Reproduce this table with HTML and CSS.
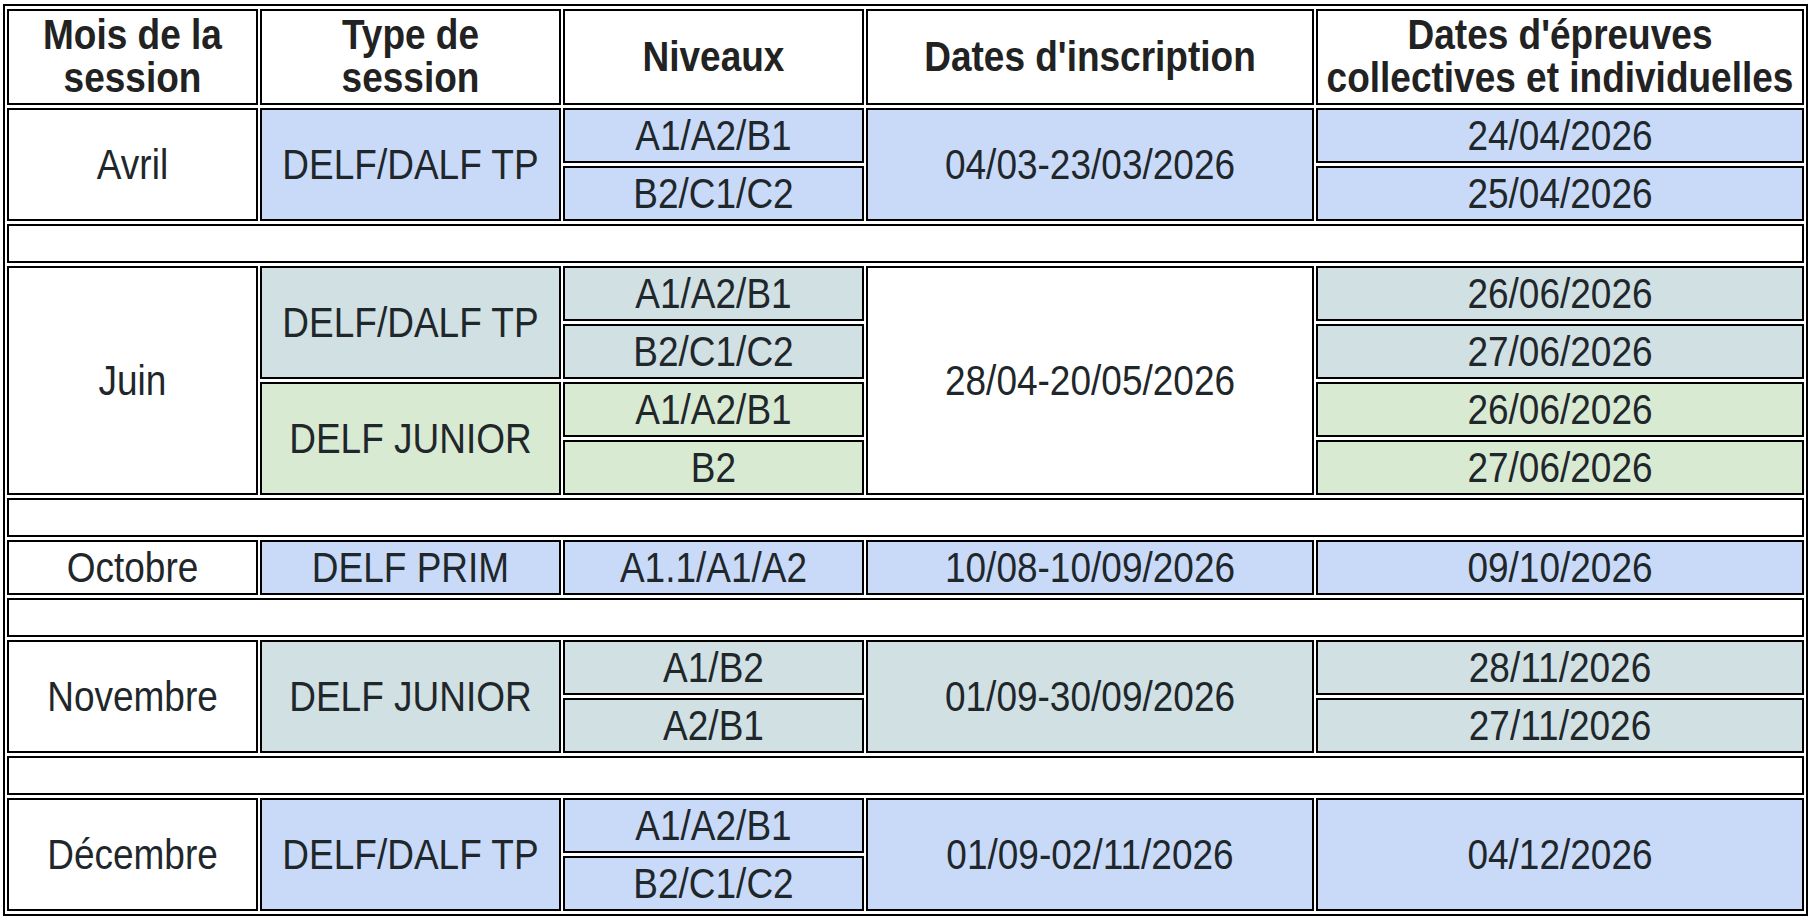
FILE: index.html
```html
<!DOCTYPE html>
<html lang="fr">
<head>
<meta charset="utf-8">
<title>Sessions DELF/DALF 2026</title>
<link rel="stylesheet" href="styles.css">
</head>
<body>
<table class="sched">
  <colgroup>
    <col class="c1"><col class="c2"><col class="c3"><col class="c4"><col class="c5">
  </colgroup>
  <thead>
    <tr class="head">
      <th><span class="t">Mois de la<br>session</span></th>
      <th><span class="t">Type de<br>session</span></th>
      <th><span class="t">Niveaux</span></th>
      <th><span class="t">Dates d'inscription</span></th>
      <th><span class="t">Dates d'épreuves<br>collectives et individuelles</span></th>
    </tr>
  </thead>
  <tbody>
    <tr class="sub">
      <td rowspan="2"><span class="t">Avril</span></td>
      <td rowspan="2" class="blue"><span class="t">DELF/DALF TP</span></td>
      <td class="blue"><span class="t">A1/A2/B1</span></td>
      <td rowspan="2" class="blue"><span class="t">04/03-23/03/2026</span></td>
      <td class="blue"><span class="t">24/04/2026</span></td>
    </tr>
    <tr class="sub">
      <td class="blue"><span class="t">B2/C1/C2</span></td>
      <td class="blue"><span class="t">25/04/2026</span></td>
    </tr>
    <tr class="gap"><td colspan="5"></td></tr>

    <tr class="sub">
      <td rowspan="4"><span class="t">Juin</span></td>
      <td rowspan="2" class="grey"><span class="t">DELF/DALF TP</span></td>
      <td class="grey"><span class="t">A1/A2/B1</span></td>
      <td rowspan="4"><span class="t">28/04-20/05/2026</span></td>
      <td class="grey"><span class="t">26/06/2026</span></td>
    </tr>
    <tr class="sub">
      <td class="grey"><span class="t">B2/C1/C2</span></td>
      <td class="grey"><span class="t">27/06/2026</span></td>
    </tr>
    <tr class="sub">
      <td rowspan="2" class="green"><span class="t">DELF JUNIOR</span></td>
      <td class="green"><span class="t">A1/A2/B1</span></td>
      <td class="green"><span class="t">26/06/2026</span></td>
    </tr>
    <tr class="sub">
      <td class="green"><span class="t">B2</span></td>
      <td class="green"><span class="t">27/06/2026</span></td>
    </tr>
    <tr class="gap"><td colspan="5"></td></tr>

    <tr class="sub">
      <td><span class="t">Octobre</span></td>
      <td class="blue"><span class="t">DELF PRIM</span></td>
      <td class="blue"><span class="t">A1.1/A1/A2</span></td>
      <td class="blue"><span class="t">10/08-10/09/2026</span></td>
      <td class="blue"><span class="t">09/10/2026</span></td>
    </tr>
    <tr class="gap"><td colspan="5"></td></tr>

    <tr class="sub">
      <td rowspan="2"><span class="t">Novembre</span></td>
      <td rowspan="2" class="grey"><span class="t">DELF JUNIOR</span></td>
      <td class="grey"><span class="t">A1/B2</span></td>
      <td rowspan="2" class="grey"><span class="t">01/09-30/09/2026</span></td>
      <td class="grey"><span class="t">28/11/2026</span></td>
    </tr>
    <tr class="sub">
      <td class="grey"><span class="t">A2/B1</span></td>
      <td class="grey"><span class="t">27/11/2026</span></td>
    </tr>
    <tr class="gap"><td colspan="5"></td></tr>

    <tr class="sub">
      <td rowspan="2"><span class="t">Décembre</span></td>
      <td rowspan="2" class="blue"><span class="t">DELF/DALF TP</span></td>
      <td class="blue"><span class="t">A1/A2/B1</span></td>
      <td rowspan="2" class="blue"><span class="t">01/09-02/11/2026</span></td>
      <td rowspan="2" class="blue"><span class="t">04/12/2026</span></td>
    </tr>
    <tr class="sub">
      <td class="blue"><span class="t">B2/C1/C2</span></td>
    </tr>
  </tbody>
</table>
</body>
</html>
```
FILE: styles.css
```css
html, body {
  margin: 0;
  padding: 0;
  background: #ffffff;
}

body {
  font-family: "Liberation Sans", Arial, Helvetica, sans-serif;
  color: #1f272b;
}

.sched {
  margin: 4px 0 0 3px;
  width: 1805px;
  table-layout: fixed;
  border: 2px solid #000;
  border-collapse: separate;
  border-spacing: 2px 3px;
  background: #ffffff;
}

.c1 { width: 251px; }
.c2 { width: 301px; }
.c3 { width: 301px; }
.c4 { width: 448px; }
.c5 { width: 488px; }

.sched th,
.sched td {
  border: 2px solid #000;
  padding: 0;
  text-align: center;
  vertical-align: middle;
  font-size: 37px;
  line-height: 38px;
  font-weight: normal;
  background: #ffffff;
}

.sched th {
  font-weight: bold;
  color: #222222;
}

.head { height: 96px; }
.sub { height: 55px; }
.gap { height: 39px; }

.t {
  display: inline-block;
  white-space: nowrap;
  transform: scaleY(1.14);
}

.sched td.blue { background: #c9daf8; }
.sched td.grey { background: #d0e0e3; }
.sched td.green { background: #d9ead3; }
```
